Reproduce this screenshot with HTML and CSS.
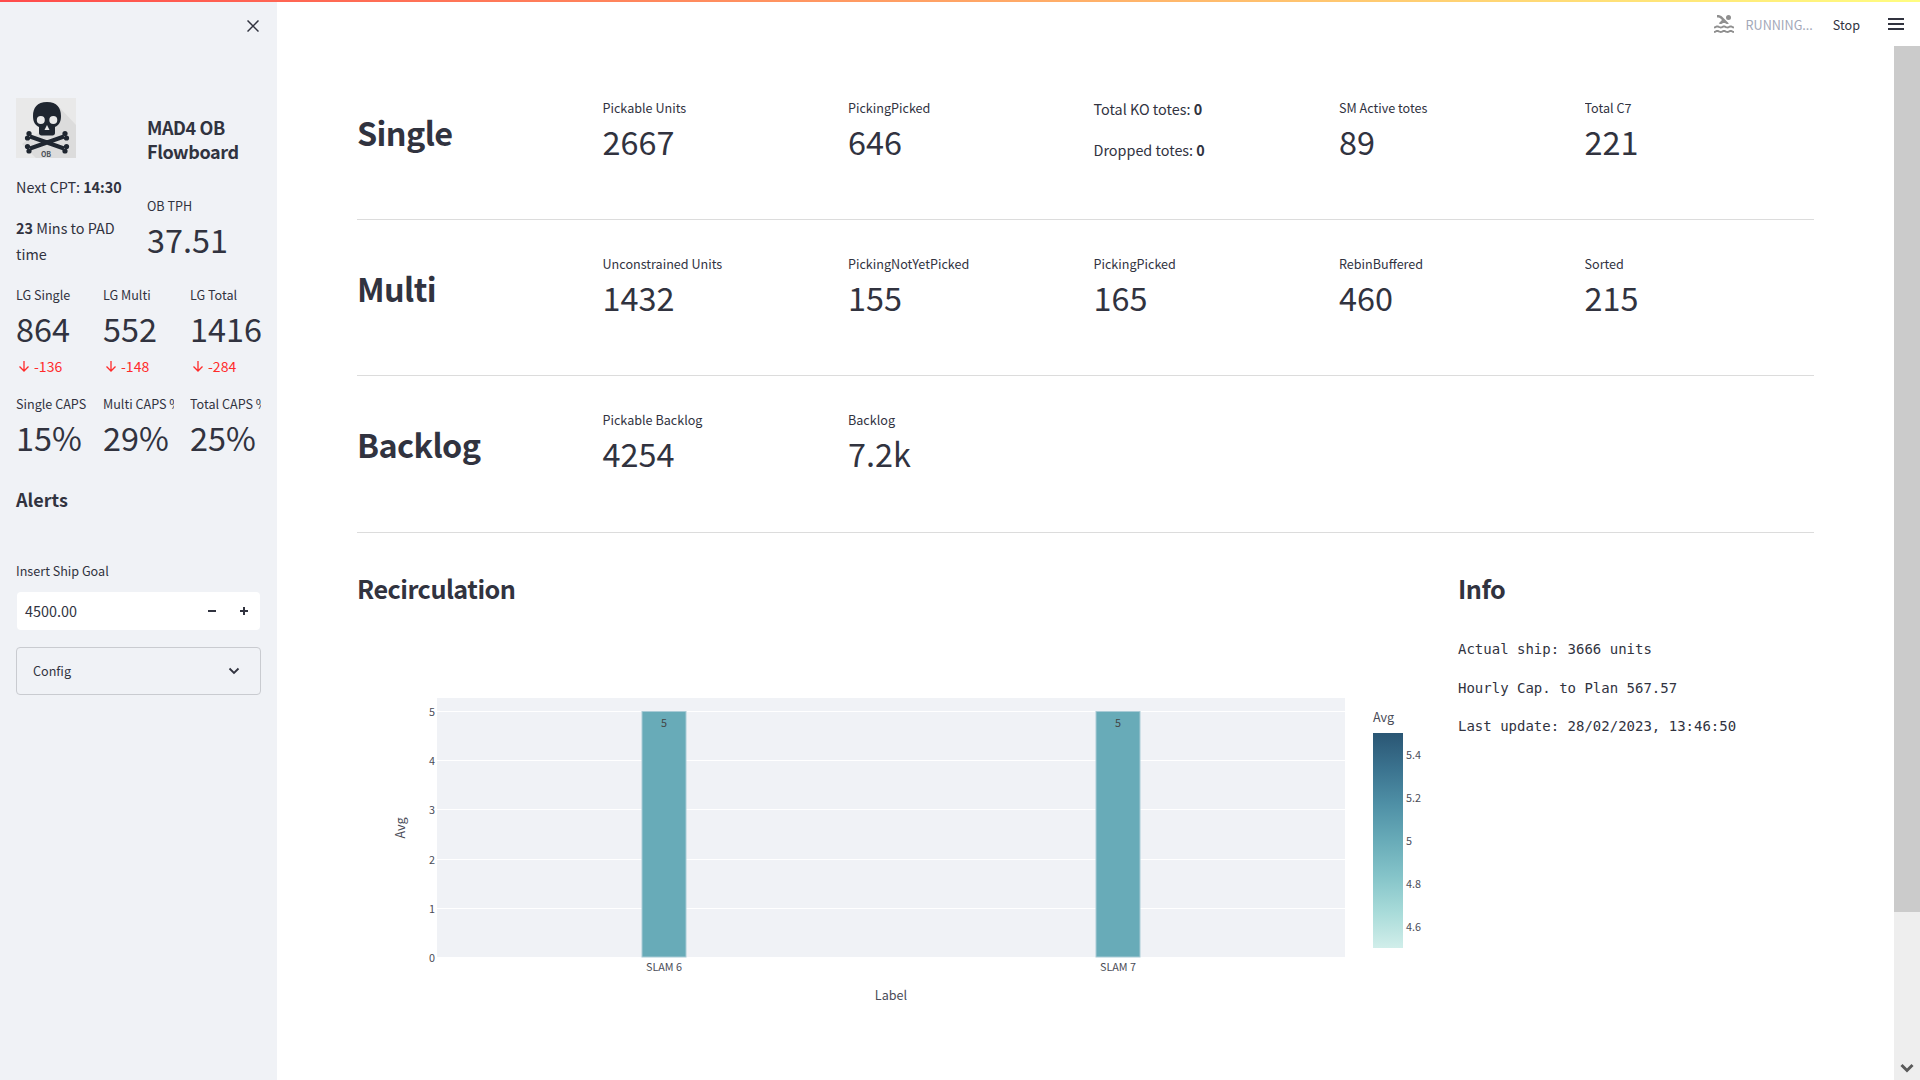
FILE: index.html
```html
<!DOCTYPE html>
<html lang="en">
<head>
  <meta charset="UTF-8">
  <title>MAD4 OB Flowboard</title>
  <link rel="stylesheet" href="styles.css">
</head>
<body>
  <div class="progress-line"></div>

  <div class="app">
    <!-- Sidebar -->
    <aside class="sidebar">
      <div class="close-row">
        <svg class="close-icon" viewBox="0 0 12 12"><path d="M.5.5l11 11M11.500.5l-11 11"/></svg>
      </div>

      <div class="side-top">
        <div>
          <svg class="logo" viewBox="0 0 60 60">
            <rect width="60" height="60" fill="#e9e9e9"/>
            <path d="M44 10L60 27V60H20L6 46L30 30z" fill="#dcdcdc"/>
            <path d="M31 4C21 4 17 10 17 18c0 6 2 9 6 11v6c0 1.500 1 2.500 2.500 2.500h11c1.500 0 2.500-1 2.500-2.500v-6c4-2 6-5 6-11 0-8-4-14-14-14z" fill="#1f2630"/>
            <path class="bones" d="M14 38.500L48 50.500M48 38.500L14 50.500"/>
            <g fill="#1f2630">
              <circle cx="13" cy="35.500" r="2.600"/>
              <circle cx="11.500" cy="40" r="2.600"/>
              <circle cx="49" cy="35.500" r="2.600"/>
              <circle cx="50.500" cy="40" r="2.600"/>
              <circle cx="13" cy="53" r="2.600"/>
              <circle cx="11.500" cy="48.500" r="2.600"/>
              <circle cx="49" cy="53" r="2.600"/>
              <circle cx="50.500" cy="48.500" r="2.600"/>
            </g>
            <circle cx="24.800" cy="22" r="4" fill="#e9e9e9"/>
            <circle cx="37.300" cy="22" r="4" fill="#e9e9e9"/>
            <path d="M31 27l-2.500 5h5z" fill="#e9e9e9"/>
            <text class="logo-text" x="30" y="58.500" text-anchor="middle">OB</text>
          </svg>
          <p class="next-cpt">Next CPT: <b>14:30</b></p>
          <p class="mins"><b>23</b> Mins to PAD time</p>
        </div>
        <div>
          <h3 class="side-title">MAD4 OB Flowboard</h3>
          <div class="metric tph">
            <div class="metric-label">OB TPH</div>
            <div class="metric-value">37.51</div>
          </div>
        </div>
      </div>

      <div class="side-metrics">
        <div class="metric">
          <div class="metric-label">LG Single</div>
          <div class="metric-value">864</div>
          <div class="delta"><svg viewBox="0 0 12 12"><path d="M6 .5v10M1.500 6L6 10.500 10.500 6"/></svg>-136</div>
        </div>
        <div class="metric">
          <div class="metric-label">LG Multi</div>
          <div class="metric-value">552</div>
          <div class="delta"><svg viewBox="0 0 12 12"><path d="M6 .5v10M1.500 6L6 10.500 10.500 6"/></svg>-148</div>
        </div>
        <div class="metric">
          <div class="metric-label">LG Total</div>
          <div class="metric-value">1416</div>
          <div class="delta"><svg viewBox="0 0 12 12"><path d="M6 .5v10M1.500 6L6 10.500 10.500 6"/></svg>-284</div>
        </div>
        <div class="metric">
          <div class="metric-label">Single CAPS</div>
          <div class="metric-value">15%</div>
        </div>
        <div class="metric">
          <div class="metric-label">Multi CAPS %</div>
          <div class="metric-value">29%</div>
        </div>
        <div class="metric">
          <div class="metric-label">Total CAPS %</div>
          <div class="metric-value">25%</div>
        </div>
      </div>

      <h4 class="alerts">Alerts</h4>

      <label class="input-label">Insert Ship Goal</label>
      <div class="number-input">
        <span class="number-value">4500.00</span>
        <svg class="step-icon" viewBox="0 0 10 10"><path d="M1 5h8"/></svg>
        <svg class="step-icon" viewBox="0 0 10 10"><path d="M1 5h8M5 1v8"/></svg>
      </div>

      <div class="expander">
        <span>Config</span>
        <svg class="chevron" viewBox="0 0 12 8"><path d="M1.500 1.500L6 6l4.500-4.500"/></svg>
      </div>
    </aside>

    <!-- Main -->
    <main class="main">
      <header class="toolbar">
        <svg class="swimmer" viewBox="0 0 24 24">
          <path d="M22 21c-1.110 0-1.730-.370-2.180-.640-.370-.220-.600-.360-1.150-.360-.560 0-.780.130-1.150.360-.460.270-1.070.640-2.180.640s-1.730-.370-2.180-.640c-.370-.220-.600-.360-1.150-.360-.560 0-.780.130-1.150.360-.460.270-1.080.640-2.190.640-1.110 0-1.730-.370-2.180-.640-.370-.230-.600-.360-1.150-.360s-.780.130-1.150.360c-.460.270-1.080.640-2.190.640v-2c.560 0 .780-.130 1.150-.360.460-.270 1.080-.640 2.190-.640s1.730.370 2.180.640c.370.220.600.360 1.150.360.560 0 .780-.130 1.150-.360.460-.270 1.080-.640 2.190-.640 1.110 0 1.730.370 2.180.640.370.220.600.360 1.150.360s.780-.130 1.150-.360c.450-.270 1.070-.640 2.180-.640s1.730.370 2.180.640c.370.230.590.360 1.150.360v2zm0-4.500c-1.110 0-1.730-.370-2.180-.640-.370-.220-.600-.360-1.150-.360-.560 0-.780.130-1.150.360-.450.270-1.070.640-2.180.640s-1.730-.370-2.180-.640c-.370-.220-.600-.360-1.150-.360-.560 0-.780.130-1.150.360-.450.270-1.070.640-2.180.640s-1.730-.370-2.180-.640c-.370-.220-.600-.360-1.150-.360s-.780.130-1.150.360c-.470.270-1.090.640-2.200.640v-2c.560 0 .780-.130 1.150-.360.450-.270 1.070-.640 2.180-.640s1.730.370 2.180.640c.370.220.600.360 1.150.360.560 0 .780-.130 1.150-.360.450-.270 1.070-.640 2.180-.640s1.730.370 2.180.640c.370.220.600.360 1.150.360s.780-.130 1.150-.360c.450-.270 1.070-.640 2.180-.640s1.730.370 2.180.640c.370.220.600.360 1.150.360v2zM8.670 12c.560 0 .780-.130 1.150-.360.460-.270 1.080-.640 2.190-.640 1.110 0 1.730.370 2.180.640.370.220.600.360 1.150.360s.780-.130 1.150-.360c.120-.070.260-.150.410-.230L10.480 5C8.930 3.450 7.500 2.990 5 3v2.500c1.820-.010 2.890.390 4 1.500l1 1-3.250 3.250c.310.120.560.270.770.390.370.230.590.360 1.150.360z"/>
          <circle cx="16.500" cy="5.500" r="2.500"/>
        </svg>
        <span class="running">RUNNING...</span>
        <span class="stop">Stop</span>
        <span class="hamburger"><i></i><i></i><i></i></span>
      </header>

      <div class="content">
        <section class="row first">
          <h2>Single</h2>
          <div class="metric">
            <div class="metric-label">Pickable Units</div>
            <div class="metric-value">2667</div>
          </div>
          <div class="metric">
            <div class="metric-label">PickingPicked</div>
            <div class="metric-value">646</div>
          </div>
          <div class="totes">
            <p>Total KO totes: <b>0</b></p>
            <p>Dropped totes: <b>0</b></p>
          </div>
          <div class="metric">
            <div class="metric-label">SM Active totes</div>
            <div class="metric-value">89</div>
          </div>
          <div class="metric">
            <div class="metric-label">Total C7</div>
            <div class="metric-value">221</div>
          </div>
        </section>

        <section class="row">
          <h2>Multi</h2>
          <div class="metric">
            <div class="metric-label">Unconstrained Units</div>
            <div class="metric-value">1432</div>
          </div>
          <div class="metric">
            <div class="metric-label">PickingNotYetPicked</div>
            <div class="metric-value">155</div>
          </div>
          <div class="metric">
            <div class="metric-label">PickingPicked</div>
            <div class="metric-value">165</div>
          </div>
          <div class="metric">
            <div class="metric-label">RebinBuffered</div>
            <div class="metric-value">460</div>
          </div>
          <div class="metric">
            <div class="metric-label">Sorted</div>
            <div class="metric-value">215</div>
          </div>
        </section>

        <section class="row last">
          <h2>Backlog</h2>
          <div class="metric">
            <div class="metric-label">Pickable Backlog</div>
            <div class="metric-value">4254</div>
          </div>
          <div class="metric">
            <div class="metric-label">Backlog</div>
            <div class="metric-value">7.2k</div>
          </div>
        </section>

        <section class="bottom">
          <div>
            <h3>Recirculation</h3>
            <svg class="chart" viewBox="0 0 1084 400">
              <defs>
                <linearGradient id="teal" x1="0" y1="1" x2="0" y2="0">
                  <stop offset="0" stop-color="#d1eeea"/>
                  <stop offset="0.167" stop-color="#a8dbd9"/>
                  <stop offset="0.333" stop-color="#85c4c9"/>
                  <stop offset="0.5" stop-color="#68abb8"/>
                  <stop offset="0.667" stop-color="#4f90a6"/>
                  <stop offset="0.833" stop-color="#3b738f"/>
                  <stop offset="1" stop-color="#2a5674"/>
                </linearGradient>
              </defs>
              <rect x="80" y="48" width="908" height="259" fill="#f0f2f6"/>
              <g class="grid-lines">
                <path d="M80 61.500H988M80 110.500H988M80 159.500H988M80 209.500H988M80 258.500H988"/>
              </g>
              <rect class="bar" x="285" y="61.500" width="44" height="245.500"/>
              <rect class="bar" x="739" y="61.500" width="44" height="245.500"/>
              <text class="bar-label" x="307" y="77" text-anchor="middle">5</text>
              <text class="bar-label" x="761" y="77" text-anchor="middle">5</text>
              <g class="tick" text-anchor="end">
                <text x="78" y="66">5</text>
                <text x="78" y="115">4</text>
                <text x="78" y="164">3</text>
                <text x="78" y="214">2</text>
                <text x="78" y="263">1</text>
                <text x="78" y="312">0</text>
              </g>
              <g class="tick" text-anchor="middle">
                <text x="307" y="321">SLAM 6</text>
                <text x="761" y="321">SLAM 7</text>
              </g>
              <text class="axis-title" x="534" y="350" text-anchor="middle">Label</text>
              <text class="axis-title" transform="translate(48 178) rotate(-90)" text-anchor="middle">Avg</text>
              <text class="axis-title" x="1016" y="72">Avg</text>
              <rect x="1016" y="83" width="30" height="215" fill="url(#teal)"/>
              <g class="tick">
                <text x="1049" y="109">5.4</text>
                <text x="1049" y="152">5.2</text>
                <text x="1049" y="195">5</text>
                <text x="1049" y="238">4.8</text>
                <text x="1049" y="281">4.6</text>
              </g>
            </svg>
          </div>
          <div>
            <h3>Info</h3>
            <div class="info">
              <p>Actual ship: 3666 units</p>
              <p>Hourly Cap. to Plan 567.57</p>
              <p>Last update: 28/02/2023, 13:46:50</p>
            </div>
          </div>
        </section>
      </div>
    </main>

    <!-- Scrollbar -->
    <div class="scroll">
      <div class="scroll-top"></div>
      <div class="scroll-thumb"></div>
      <div class="scroll-track">
        <svg class="scroll-arrow" viewBox="0 0 14 10"><path d="M1.500 2L7 7.500 12.500 2"/></svg>
      </div>
    </div>
  </div>
</body>
</html>
```

FILE: styles.css
```css
body {
  font-family: "Noto Sans CJK SC", "Noto Sans", sans-serif;
  margin: 0;
  height: 1080px;
  overflow: hidden;
  background-color: #ffffff;
  color: #31333f;
}

p, h2, h3, h4 {
  margin: 0;
}

b, h2, h3, h4 {
  font-weight: 600;
}

.progress-line {
  height: 2px;
  background: linear-gradient(90deg, #ff4b4b, #fffd80);
}

.app {
  display: flex;
  height: 1078px;
}

/* sidebar */
.sidebar {
  width: 277px;
  flex-shrink: 0;
  box-sizing: border-box;
  padding: 0 16px;
  background-color: #f0f2f6;
}

.close-row {
  display: flex;
  justify-content: flex-end;
  height: 96px;
  padding: 18px 2px 0 0;
  box-sizing: border-box;
}

.close-icon {
  width: 12px;
  height: 12px;
  fill: none;
  stroke: #31333f;
  stroke-width: 1.500;
}

.side-top {
  display: grid;
  grid-template-columns: 115px 115px;
  column-gap: 16px;
  height: 187px;
}

.logo {
  display: block;
  width: 60px;
  height: 60px;
}

.bones {
  fill: none;
  stroke: #1f2630;
  stroke-width: 4;
}

.logo-text {
  font-size: 7px;
  font-weight: 700;
  fill: #4a5058;
}

.next-cpt {
  font-size: 14.400px;
  line-height: 26px;
  margin-top: 16px;
  white-space: nowrap;
}

.mins {
  font-size: 14.400px;
  line-height: 26px;
  margin-top: 15px;
}

.side-title {
  font-size: 18px;
  line-height: 24px;
  letter-spacing: -0.400px;
  padding-top: 17px;
}

.tph {
  margin-top: 33px;
}

.metric-label {
  font-size: 12.600px;
  line-height: 20px;
  margin-bottom: 1px;
  white-space: nowrap;
  overflow: hidden;
}

.metric-value {
  font-size: 32.400px;
  line-height: 44px;
  white-space: nowrap;
}

.side-metrics {
  display: grid;
  grid-template-columns: repeat(3, 71px);
  gap: 18px 16px;
}

.delta {
  display: flex;
  align-items: center;
  gap: 4px;
  margin-top: 6px;
  padding-left: 2px;
  font-size: 14px;
  line-height: 20px;
  color: #ff2b2b;
}

.delta svg {
  width: 12px;
  height: 13px;
  fill: none;
  stroke: #ff2b2b;
  stroke-width: 1.300;
}

.alerts {
  font-size: 18px;
  line-height: 24px;
  margin-top: 28px;
}

.input-label {
  display: block;
  font-size: 12.600px;
  line-height: 20px;
  margin-top: 50px;
}

.number-input {
  display: flex;
  align-items: center;
  gap: 22px;
  height: 38px;
  margin: 11px 1px 0;
  padding: 0 11px 1px 8px;
  box-sizing: border-box;
  background-color: #ffffff;
  border-radius: 4px;
  font-size: 14.400px;
}

.number-value {
  flex: 1;
}

.step-icon {
  width: 10px;
  height: 10px;
  fill: none;
  stroke: #31333f;
  stroke-width: 2;
}

.expander {
  display: flex;
  align-items: center;
  justify-content: space-between;
  box-sizing: border-box;
  height: 48px;
  margin-top: 17px;
  padding: 0 20px 1px 16px;
  border: 1px solid #c9cbd0;
  border-radius: 4px;
  font-size: 12.600px;
}

.chevron {
  width: 12px;
  height: 8px;
  fill: none;
  stroke: #31333f;
  stroke-width: 1.800;
}

/* main */
.main {
  flex: 1;
  min-width: 0;
}

.toolbar {
  display: flex;
  align-items: center;
  height: 44px;
  box-sizing: border-box;
  font-size: 12.600px;
}

.swimmer {
  width: 24px;
  height: 24px;
  margin-left: auto;
  fill: #8f8f8f;
}

.running {
  margin-left: 10px;
  color: #a3a8b8;
}

.stop {
  margin-left: 20px;
}

.hamburger {
  display: flex;
  flex-direction: column;
  gap: 3px;
  width: 16px;
  margin-left: 28px;
  margin-right: -10px;
}

.hamburger i {
  display: block;
  height: 2px;
  background-color: #31333f;
}

.content {
  width: 1457px;
  margin: 17px 0 0 80px;
}

.row {
  display: grid;
  grid-template-columns: repeat(6, 1fr);
  column-gap: 16px;
  box-sizing: border-box;
  height: 156px;
  padding-top: 34px;
  border-bottom: 1px solid #dcdcdc;
}

.row.first {
  height: 157px;
  padding-top: 35px;
}

.row.last {
  height: 157px;
}

.row h2 {
  font-size: 32.400px;
  line-height: 46px;
  letter-spacing: -0.600px;
  padding-top: 11px;
}

.totes {
  margin-top: -2px;
}

.totes p {
  font-size: 14.400px;
  line-height: 26px;
  margin-bottom: 15px;
  white-space: nowrap;
}

.bottom {
  display: grid;
  grid-template-columns: 1084px 1fr;
  column-gap: 17px;
  padding-top: 35px;
}

.bottom h3 {
  font-size: 25.200px;
  line-height: 40px;
  letter-spacing: -0.500px;
}

.chart {
  display: block;
  width: 1084px;
  height: 400px;
  margin-top: 42px;
}

.grid-lines path {
  stroke: #ffffff;
  stroke-width: 1;
}

.bar {
  fill: #68abb8;
  stroke: #a9cbd6;
  stroke-width: 1;
}

.bar-label {
  font-size: 10.800px;
  fill: #444444;
}

.tick text {
  font-size: 10.800px;
  fill: #4a4c58;
}

.axis-title {
  font-size: 12.600px;
  fill: #4a4c58;
}

.info {
  margin-top: 31px;
}

.info p {
  font-family: "DejaVu Sans Mono", "Liberation Mono", monospace;
  font-size: 14px;
  line-height: 20px;
  margin-bottom: 18.500px;
  white-space: nowrap;
}

/* fake scrollbar */
.scroll {
  display: flex;
  flex-direction: column;
  width: 26px;
  flex-shrink: 0;
}

.scroll-top {
  height: 44px;
}

.scroll-thumb {
  height: 866px;
  background-color: #cbcbcb;
}

.scroll-track {
  flex: 1;
  display: flex;
  align-items: flex-end;
  justify-content: center;
  padding-bottom: 7px;
  background-color: #eeeeee;
}

.scroll-arrow {
  width: 14px;
  height: 10px;
  fill: none;
  stroke: #5a5a5a;
  stroke-width: 3;
}
```
